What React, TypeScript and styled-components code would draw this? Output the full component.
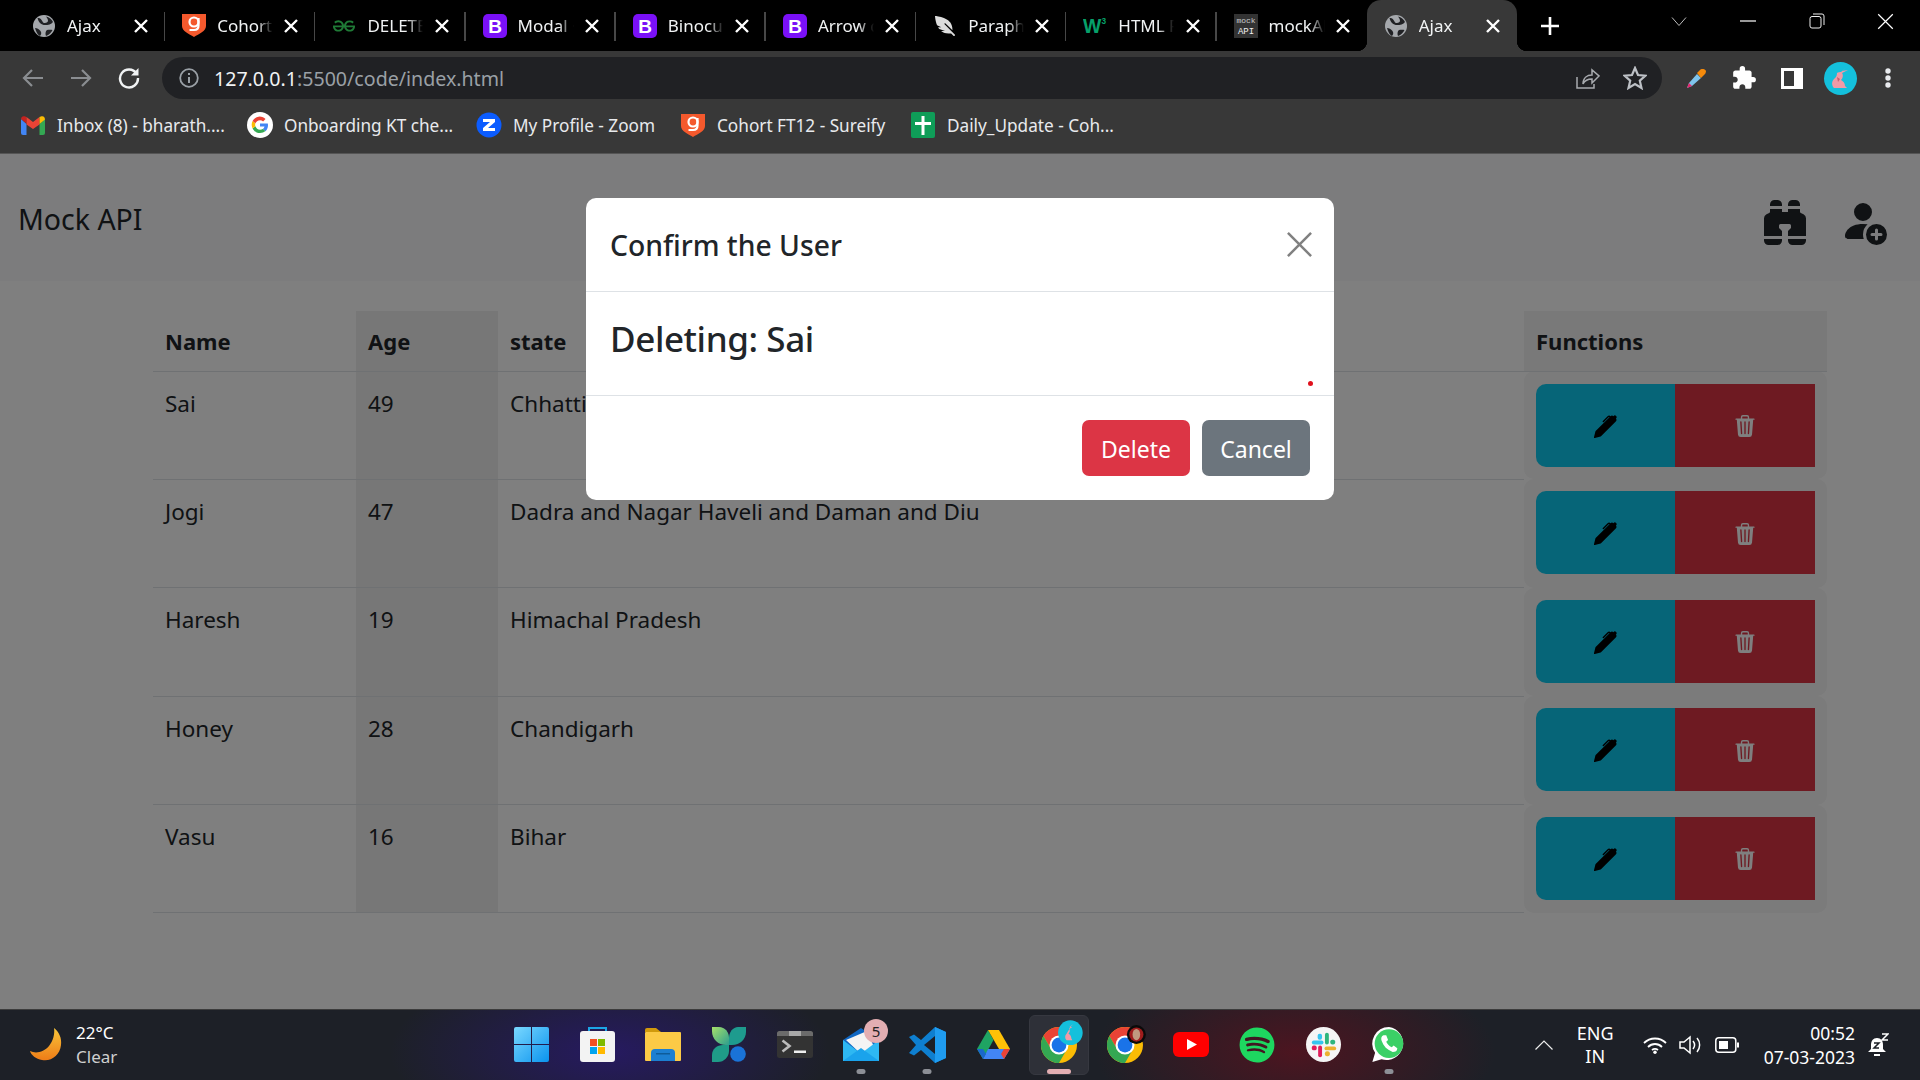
import React from "react";
import styled, { createGlobalStyle } from "styled-components";
import { BsBinocularsFill, BsPersonFillAdd, BsPenFill, BsTrash3Fill } from "react-icons/bs";
import { SiGeeksforgeeks } from "react-icons/si";
import { FaFeatherAlt, FaSpotify } from "react-icons/fa";
import { MdExtension } from "react-icons/md";

const FONT = `"Noto Sans", "Open Sans", "Liberation Sans", sans-serif`;

const Global = createGlobalStyle`
  html, body { margin: 0; padding: 0; background: #000; }
  body { font-family: ${FONT}; overflow: hidden; }
  * { box-sizing: border-box; }
`;

const Screen = styled.div`
  width: 1920px;
  height: 1080px;
  display: flex;
  flex-direction: column;
  overflow: hidden;
`;

/* ---------- browser chrome ---------- */
const TabStrip = styled.div`
  height: 51px;
  background: #000;
  display: flex;
  padding-left: 15px;
  flex: none;
`;
const Tab = styled.div<{ $active?: boolean; $last?: boolean }>`
  width: 150.2px;
  height: 51px;
  position: relative;
  display: flex;
  align-items: center;
  padding-left: 17px;
  color: #f1f3f4;
  font-size: 17px;
  background: ${(p) => (p.$active ? "#383838" : "transparent")};
  border-radius: ${(p) => (p.$active ? "14px 14px 0 0" : "0")};
  &::after {
    content: "";
    position: absolute;
    display: ${(p) => (p.$active || p.$last ? "none" : "block")};
    right: 0;
    top: 12px;
    width: 1.5px;
    height: 29px;
    background: #474747;
  }
`;
const TabFootLeft = styled.span`
  position: absolute;
  left: -10px;
  bottom: 0;
  width: 10px;
  height: 10px;
  background: radial-gradient(circle at 0 0, transparent 10px, #383838 10.5px);
`;
const TabFootRight = styled.span`
  position: absolute;
  right: -10px;
  bottom: 0;
  width: 10px;
  height: 10px;
  background: radial-gradient(circle at 100% 0, transparent 10px, #383838 10.5px);
`;
const TabIcon = styled.span`
  width: 24px;
  height: 24px;
  display: flex;
  align-items: center;
  justify-content: center;
  flex: none;
  margin-right: 11px;
`;
const TabLabel = styled.span`
  width: 56px;
  overflow: hidden;
  white-space: nowrap;
  flex: none;
  -webkit-mask-image: linear-gradient(to right, #000 72%, transparent 100%);
  mask-image: linear-gradient(to right, #000 72%, transparent 100%);
`;
const TabClose = styled.span`
  position: absolute;
  right: 17px;
  top: 19px;
  width: 14px;
  height: 14px;
  display: flex;
`;
const FlipIcon = styled.span`
  display: flex;
  transform: scaleX(-1);
`;
const NewTab = styled.div`
  width: 30px;
  margin-left: 18px;
  display: flex;
  align-items: center;
  justify-content: center;
`;
const WindowControls = styled.div`
  margin-left: auto;
  display: flex;
  align-items: flex-start;
  padding-top: 12px;
  padding-right: 0;
`;
const WinBtn = styled.div`
  width: 69px;
  height: 18px;
  display: flex;
  align-items: center;
  justify-content: center;
`;
const Toolbar = styled.div`
  height: 51px;
  background: #383838;
  display: flex;
  align-items: center;
  flex: none;
  padding: 3px 0 0 21px;
`;
const NavBtn = styled.div`
  width: 24px;
  height: 24px;
  margin-right: 24px;
  display: flex;
  align-items: center;
  justify-content: center;
`;
const AddressBar = styled.div`
  width: 1500px;
  height: 42px;
  margin-left: -3px;
  border-radius: 21px;
  background: #202124;
  display: flex;
  align-items: center;
  padding: 0 15px 0 17px;
  font-size: 19.6px;
  color: #9aa0a6;
`;
const UrlHost = styled.span`
  color: #f1f3f4;
`;
const UrlInfo = styled.span`
  width: 20px;
  height: 20px;
  margin-right: 15px;
  display: flex;
`;
const UrlActions = styled.div`
  margin-left: auto;
  display: flex;
  align-items: center;
  gap: 23px;
`;
const ToolIcons = styled.div`
  display: flex;
  align-items: center;
  margin-left: 10px;
`;
const ToolSlot = styled.div`
  width: 48px;
  display: flex;
  align-items: center;
  justify-content: center;
`;
const Avatar = styled.div`
  width: 33px;
  height: 33px;
  border-radius: 50%;
  background: #14c0dc;
  display: flex;
  align-items: center;
  justify-content: center;
`;
const Bookmarks = styled.div`
  height: 51px;
  background: #383838;
  display: flex;
  align-items: center;
  flex: none;
  padding: 0 0 5px 20px;
  color: #e8eaed;
  font-size: 17.2px;
`;
const Bookmark = styled.div<{ $w: number }>`
  width: ${(p) => p.$w}px;
  display: flex;
  align-items: center;
  gap: 11px;
  white-space: nowrap;
  flex: none;
`;
const BmIcon = styled.span`
  width: 26px;
  height: 26px;
  display: flex;
  align-items: center;
  justify-content: center;
  flex: none;
`;

/* ---------- page ---------- */
const Page = styled.div`
  flex: 1;
  position: relative;
  background: #fff;
  border-top: 1px solid #555;
  color: #212529;
  overflow: hidden;
`;
const NavBar = styled.div`
  height: 127px;
  background: #f8f9fa;
  display: flex;
  align-items: flex-start;
  padding: 24px 33px 0 18px;
`;
const Brand = styled.div`
  font-size: 28.5px;
  font-weight: 400;
  line-height: 40px;
  margin-top: 21px;
`;
const NavIcons = styled.div`
  margin-left: auto;
  display: flex;
  align-items: center;
  gap: 30px;
  padding-top: 19px;
  color: #212529;
`;
const TableWrap = styled.div`
  padding: 30px 93px 0 153px;
`;
const Table = styled.table`
  width: 1674px;
  border-collapse: collapse;
  table-layout: fixed;
  font-size: 22.5px;
`;
const Th = styled.th<{ $tint?: string; $w: number }>`
  width: ${(p) => p.$w}px;
  height: 60px;
  padding: 0 12px;
  text-align: left;
  font-size: 22px;
  font-weight: 700;
  background: ${(p) => p.$tint || "transparent"};
  border-bottom: 1px solid #dee2e6;
`;
const Td = styled.td<{ $tint?: string }>`
  height: 108.4px;
  padding: 14px 12px 0;
  vertical-align: top;
  line-height: 36px;
  background: ${(p) => p.$tint || "transparent"};
  border-bottom: 1px solid #dee2e6;
`;
const FnCell = styled.td`
  padding: 12px;
  background: #f6f6f6;
  border-radius: 10px;
  vertical-align: top;
`;
const BtnGroup = styled.div`
  display: flex;
  height: 83px;
`;
const EditBtn = styled.div`
  flex: 139;
  background: #0dcaf0;
  color: #000;
  border-radius: 10px 0 0 10px;
  display: flex;
  align-items: center;
  justify-content: center;
  padding-top: 2px;
`;
const DelBtn = styled.div`
  flex: 140;
  background: #dc3545;
  color: #fff;
  display: flex;
  align-items: center;
  justify-content: center;
  padding-top: 2px;
`;

/* ---------- modal ---------- */
const Backdrop = styled.div`
  position: absolute;
  inset: 0;
  background: rgba(0, 0, 0, 0.5);
  display: flex;
  justify-content: center;
  padding-top: 44px;
`;
const Modal = styled.div`
  position: relative;
  width: 748px;
  height: 302px;
  background: #fff;
  border-radius: 10px;
  display: flex;
  flex-direction: column;
`;
const ModalHeader = styled.div`
  height: 94px;
  border-bottom: 1px solid #dee2e6;
  display: flex;
  align-items: center;
  justify-content: space-between;
  padding: 0 21px 0 24px;
`;
const ModalTitle = styled.div`
  font-size: 28.3px;
  font-weight: 500;
`;
const ModalBody = styled.div`
  height: 104px;
  border-bottom: 1px solid #dee2e6;
  padding: 24px 24px 0;
  font-size: 35px;
  font-weight: 500;
  letter-spacing: -0.4px;
  line-height: 46px;
`;
const ModalFooter = styled.div`
  flex: 1;
  display: flex;
  justify-content: flex-end;
  align-items: center;
  gap: 12px;
  padding: 0 24px;
`;
const ModalBtn = styled.div<{ $bg: string }>`
  width: 108px;
  height: 56px;
  border-radius: 7px;
  background: ${(p) => p.$bg};
  color: #fff;
  font-size: 23px;
  display: flex;
  align-items: center;
  justify-content: center;
  padding-top: 1px;
`;
const RedDot = styled.span`
  position: absolute;
  left: 722px;
  top: 183px;
  width: 5px;
  height: 5px;
  border-radius: 50%;
  background: #e0101c;
`;

/* ---------- taskbar ---------- */
const Taskbar = styled.div`
  height: 71px;
  flex: none;
  display: grid;
  grid-template-columns: 1fr auto 1fr;
  align-items: center;
  color: #fff;
  border-top: 1px solid #3c3c3c;
  background:
    radial-gradient(ellipse 220px 90px at 610px 60%, #261a60 0%, transparent 100%),
    radial-gradient(ellipse 200px 90px at 1295px 60%, #4c1520 0%, transparent 100%),
    #1d2027;
`;
const Weather = styled.div`
  display: flex;
  align-items: center;
  padding-left: 29px;
  gap: 11px;
`;
const WeatherText = styled.div`
  font-size: 17px;
  line-height: 24px;
`;
const WeatherSub = styled.div`
  color: #cfcfcf;
`;
const Apps = styled.div`
  display: flex;
`;
const AppBtn = styled.div<{ $active?: boolean }>`
  position: relative;
  width: 66px;
  height: 60px;
  display: flex;
  align-items: center;
  justify-content: center;
  padding-bottom: 1px;
  &::before {
    content: "";
    position: absolute;
    inset: 0 3px;
    border-radius: 6px;
    background: ${(p) => (p.$active ? "#2e3038" : "transparent")};
    border: 1px solid ${(p) => (p.$active ? "#363840" : "transparent")};
  }
  & > svg {
    position: relative;
    overflow: visible;
  }
`;
const RunDot = styled.span<{ $on?: boolean }>`
  position: absolute;
  left: 50%;
  bottom: 1px;
  transform: translateX(-50%);
  width: ${(p) => (p.$on ? "24px" : "9px")};
  height: 5px;
  border-radius: 3px;
  background: ${(p) => (p.$on ? "#e3aeb2" : "#8c8f96")};
`;
const Badge = styled.span`
  position: absolute;
  left: 36px;
  top: 4px;
  width: 24px;
  height: 24px;
  border-radius: 50%;
  background: #e3aeb2;
  color: #222;
  font-size: 15px;
  display: flex;
  align-items: center;
  justify-content: center;
`;
const Tray = styled.div`
  justify-self: end;
  display: flex;
  align-items: center;
  padding-right: 31px;
  font-size: 18px;
`;
const Lang = styled.div`
  text-align: center;
  line-height: 23px;
  margin: 0 29px 0 24px;
`;
const TrayIcons = styled.div`
  display: flex;
  align-items: center;
  gap: 12px;
  margin-right: 25px;
`;
const Clock = styled.div`
  text-align: right;
  line-height: 24px;
  margin-right: 13px;
  font-size: 17.5px;
`;

/* ---------- icons ---------- */
const X = ({ s = 14, w = 2.4, c = "#fff" }: { s?: number; w?: number; c?: string }) => (
  <svg width={s} height={s} viewBox="0 0 14 14">
    <path d="M1 1 13 13M13 1 1 13" stroke={c} strokeWidth={w} fill="none" />
  </svg>
);
const Shield = () => (
  <svg width="24" height="23" viewBox="0 0 24 23">
    <path d="M0 0h24v12c0 5-7 8-12 11C7 20 0 17 0 12z" fill="#f4592d" />
    <circle cx="12" cy="8" r="4.500" fill="none" stroke="#fff" strokeWidth="2.200" />
    <path d="M16.500 4v7.500c0 3-2 4.500-4.500 4.500H7.500" fill="none" stroke="#fff" strokeWidth="2.200" />
  </svg>
);
const W3 = () => (
  <svg width="26" height="22" viewBox="0 0 26 22">
    <text x="0" y="19" fontSize="21" fontWeight="700" fill="#06a06a" fontFamily="Liberation Sans">W</text>
    <text x="20" y="9" fontSize="9" fontWeight="700" fill="#06a06a" fontFamily="Liberation Sans">3</text>
  </svg>
);
const MockApi = () => (
  <svg width="24" height="24" viewBox="0 0 24 24">
    <rect width="24" height="24" fill="#333" />
    <text x="12" y="9" fontSize="8" fill="#ccc" textAnchor="middle" fontFamily="Liberation Mono">mock</text>
    <text x="12" y="20" fontSize="9" fill="#eee" textAnchor="middle" fontFamily="Liberation Mono">API</text>
  </svg>
);
const Globe = () => (
  <svg width="22" height="22" viewBox="0 0 22 22">
    <circle cx="11" cy="11" r="11" fill="#a5a8ac" />
    <path d="M4.500 3c2.500-.5 4 1.500 5 3.500 1 2.300 3.500 1.500 5 .5 1-1 .5-3-1.500-5.500 3 .5 6 3 7 5.500-1.500 2.500-5 3-8 3-3.500 0-6.500-2.500-7.500-7z" fill="#202124" />
    <path d="M2 13c2 0 4 1 5.500 3s.5 4-.5 5c-2-1-4-4-5-8zM14 15c2-.5 4-.5 5.500 0-1 2.500-3.500 5-6.500 6-1-2-.5-5 1-6z" fill="#202124" />
  </svg>
);
const Boot = () => (
  <svg width="24" height="24" viewBox="0 0 24 24">
    <rect width="24" height="24" rx="5" fill="#7a10f7" />
    <text x="12" y="19" fontSize="19" fontWeight="700" fill="#fff" textAnchor="middle" fontFamily="Liberation Sans">B</text>
  </svg>
);

const GmailIcon = () => (
  <svg width="24" height="19" viewBox="0 0 24 19">
    <path d="M0 3v14a2 2 0 0 0 2 2h3.500V8z" fill="#4285f4" />
    <path d="M24 3v14a2 2 0 0 1-2 2h-3.500V8z" fill="#34a853" />
    <path d="M0 3 5.500 7.500 5.500 1 3.500.3C2 -.3 0 .8 0 3z" fill="#c5221f" />
    <path d="M5.500 1v7.500L12 13l6.500-4.500V1L12 6z" fill="#ea4335" />
    <path d="M18.500 1v7L24 3.500C24 .8 22-.3 20.500.3z" fill="#fbbc04" />
  </svg>
);
const GoogleIcon = () => (
  <svg width="26" height="26" viewBox="0 0 26 26">
    <circle cx="13" cy="13" r="13" fill="#fff" />
    <path d="M21 13.200c0-.7-.1-1.200-.2-1.700H13v3.100h4.500c-.2 1-.8 1.900-1.700 2.500l2.700 2.100c1.600-1.500 2.500-3.600 2.500-6z" fill="#4285f4" />
    <path d="M13 21c2.200 0 4-.7 5.500-2l-2.700-2.100c-.7.500-1.700.8-2.800.8-2.200 0-4-1.500-4.600-3.400l-2.800 2.100C7 19.200 9.800 21 13 21z" fill="#34a853" />
    <path d="M8.400 14.300a4.800 4.800 0 0 1 0-3L5.600 9.100a8 8 0 0 0 0 7.300z" fill="#fbbc05" />
    <path d="M13 8.200c1.200 0 2.300.4 3.100 1.200l2.400-2.400A8 8 0 0 0 5.600 9.100l2.800 2.200C9 9.600 10.800 8.200 13 8.200z" fill="#ea4335" />
  </svg>
);
const ZoomIcon = () => (
  <svg width="26" height="26" viewBox="0 0 26 26">
    <circle cx="13" cy="13" r="12.500" fill="#0b5cff" />
    <path d="M7 7h12v3l-7 6h7v3H7v-3l7-6H7z" fill="#fff" />
  </svg>
);
const SheetIcon = () => (
  <svg width="24" height="26" viewBox="0 0 24 26">
    <rect width="24" height="26" rx="2" fill="#0f9d58" />
    <path d="M10.500 4h3v6H20v3h-6.500v10h-3V13H4v-3h6.500z" fill="#fff" />
  </svg>
);

const WinLogo = () => (
  <svg width="35" height="35" viewBox="0 0 35 35">
    <defs>
      <linearGradient id="wl" x1="0" y1="0" x2="1" y2="1"><stop offset="0" stopColor="#7ad8ff" /><stop offset="1" stopColor="#0a93ee" /></linearGradient>
    </defs>
    <path d="M0 2a2 2 0 0 1 2-2h15v17H0zM18 0h15a2 2 0 0 1 2 2v15H18zM0 18h17v17H2a2 2 0 0 1-2-2zM18 18h17v15a2 2 0 0 1-2 2H18z" fill="url(#wl)" />
  </svg>
);
const StoreIcon = () => (
  <svg width="35" height="35" viewBox="0 0 35 35">
    <path d="M9 6V1h17v5" fill="none" stroke="#1ca6e6" strokeWidth="2" />
    <path d="M3 4h29a3 3 0 0 1 3 3v25a3 3 0 0 1-3 3H3a3 3 0 0 1-3-3V7a3 3 0 0 1 3-3z" fill="#f3f3f3" />
    <rect x="10" y="12" width="7" height="7" fill="#f25022" />
    <rect x="18" y="12" width="7" height="7" fill="#7fba00" />
    <rect x="10" y="20" width="7" height="7" fill="#00a4ef" />
    <rect x="18" y="20" width="7" height="7" fill="#ffb900" />
  </svg>
);
const FilesIcon = () => (
  <svg width="36" height="33" viewBox="0 0 36 33">
    <path d="M0 2a2 2 0 0 1 2-2h9l5 4H0z" fill="#d19a0c" />
    <rect x="0" y="4" width="36" height="29" rx="1" fill="#fcca46" />
    <path d="M6 25a4 4 0 0 1 4-4h16a4 4 0 0 1 4 4v8H6z" fill="#1c7fd1" />
    <rect x="11" y="25" width="14" height="1.500" fill="#0e5c99" />
  </svg>
);
const ButterflyIcon = () => (
  <svg width="34" height="35" viewBox="0 0 34 35">
    <defs><linearGradient id="bf" x1="0" y1="0" x2="1" y2="1"><stop offset="0" stopColor="#a6e06a" /><stop offset="1" stopColor="#2e9e8e" /></linearGradient></defs>
    <path d="M0 0h7c6 0 10 5 10 11v7h-3C6 18 0 12 0 4z" fill="url(#bf)" />
    <path d="M34 0h-8c-5 0-9 5-9 11v7h3c8 0 14-6 14-13z" fill="#1e9b8e" />
    <path d="M0 35v-7c0-6 5-10 11-10h6v6c0 6-5 11-11 11z" fill="#1f9c88" />
    <circle cx="26" cy="27" r="7.800" fill="#1a73d8" />
  </svg>
);
const TermIcon = () => (
  <svg width="36" height="27" viewBox="0 0 36 27">
    <rect width="36" height="27" rx="2.500" fill="#333" />
    <path d="M0 2.500A2.500 2.500 0 0 1 2.500 0h31A2.500 2.500 0 0 1 36 2.500V5H0z" fill="#6b6b6b" />
    <rect x="12" y="0" width="12" height="5" fill="#a8a8a8" />
    <path d="M5.500 9.500l7 5.500-7 5.500" stroke="#bbb" strokeWidth="2.600" fill="none" />
    <rect x="17" y="19.500" width="12" height="2.500" fill="#eee" />
  </svg>
);
const MailIcon = () => (
  <svg width="36" height="33" viewBox="0 0 36 33">
    <path d="M18 0 36 12v21H0V12z" fill="#0f66c2" />
    <path d="M3 12 24 3l7 16-13 7z" fill="#f4f4f4" />
    <path d="M0 12 16 24h4l16-12v21H0z" fill="#2eb8f2" />
    <path d="M0 33 18 20l18 13z" fill="#1aa3ec" />
  </svg>
);
const VsIcon = () => (
  <svg width="37" height="36" viewBox="0 0 37 36">
    <path d="M26 0 37 5v26l-11 5-14-13-7 5.500L0 26l7-8-7-8 5-2.500L12 13z" fill="#0e7fd0" />
    <path d="M26 0 37 5v26l-11 5z" fill="#1f9cf0" />
    <path d="M26 9 15 18l11 9z" fill="#1d1f26" />
  </svg>
);
const DriveIcon = () => (
  <svg width="33" height="29" viewBox="0 0 33 29">
    <path d="M11 0h0l5.500 10L6 29 0 19z" fill="#1fa463" />
    <path d="M11 0h11l11 19H22z" fill="#ffc107" />
    <path d="M11 19h22l-6 10H6z" fill="#4285f4" />
    <path d="M27 29l6-10h-6l-3 5z" fill="#ea4335" />
    <path d="M6 29 0 19h6l3 5z" fill="#1a68c9" />
  </svg>
);
const ChromeIcon = ({ children }: { children?: React.ReactNode }) => (
  <svg width="36" height="36" viewBox="0 0 38 38">
    <circle cx="19" cy="19" r="19" fill="#fbbc05" />
    <path d="M35.450 9.500A19 19 0 0 0 2.550 9.500L11 24 19 10z" fill="#ea4335" />
    <path d="M2.550 9.500A19 19 0 0 0 19 38L27 24H11z" fill="#34a853" />
    <circle cx="19" cy="19" r="10" fill="#fff" />
    <circle cx="19" cy="19" r="7.800" fill="#1a73e8" />
    {children}
  </svg>
);
const YtIcon = () => (
  <svg width="36" height="25" viewBox="0 0 36 25">
    <rect width="36" height="25" rx="6" fill="#f00" />
    <path d="M14 7l10 5.500-10 5.500z" fill="#fff" />
  </svg>
);
const SlackIcon = () => (
  <svg width="35" height="35" viewBox="0 0 36 36">
    <circle cx="18" cy="18" r="18" fill="#f5f5f5" />
    <rect x="6" y="14" width="12" height="4" rx="2" fill="#36c5f0" />
    <rect x="12" y="7" width="4.500" height="6" rx="2" fill="#36c5f0" />
    <rect x="19.500" y="6" width="4" height="12" rx="2" fill="#2eb67d" />
    <rect x="25" y="13" width="5" height="5" rx="2" fill="#2eb67d" />
    <rect x="19" y="20" width="12" height="4" rx="2" fill="#ecb22e" />
    <rect x="19.500" y="25" width="5" height="5" rx="2" fill="#ecb22e" />
    <rect x="12.500" y="19" width="4" height="12" rx="2" fill="#e01e5a" />
    <rect x="6" y="19" width="5" height="5" rx="2" fill="#e01e5a" />
  </svg>
);
const WaIcon = () => (
  <svg width="36" height="37" viewBox="0 0 38 40">
    <path d="M19 1a18 18 0 0 0-15 28L1 39l10-3A18 18 0 1 0 19 1z" fill="#fff" />
    <circle cx="19" cy="19" r="15.500" fill="#3bd066" />
    <path d="M13 10c-2 1-3 3-2 6 2 6 6 10 12 12 3 0 5-1 5-4l-4-3-2 2c-3-1-5-4-6-6l2-2-2-5z" fill="#fff" />
  </svg>
);

const tabs = [
  { t: "Ajax", i: <Globe /> },
  { t: "Cohort FT12", i: <Shield /> },
  { t: "DELETE - HTTP", i: <SiGeeksforgeeks size={22} color="#1f7a36" /> },
  { t: "Modal · Bootstrap", i: <Boot /> },
  { t: "Binoculars", i: <Boot /> },
  { t: "Arrow down", i: <Boot /> },
  { t: "Paraphrasing", i: <FlipIcon><FaFeatherAlt size={20} color="#ddd" /></FlipIcon> },
  { t: "HTML Reference", i: <W3 /> },
  { t: "mockAPI", i: <MockApi /> },
  { t: "Ajax", i: <Globe />, active: true },
];

const rows = [
  ["Sai", "49", "Chhattisgarh"],
  ["Jogi", "47", "Dadra and Nagar Haveli and Daman and Diu"],
  ["Haresh", "19", "Himachal Pradesh"],
  ["Honey", "28", "Chandigarh"],
  ["Vasu", "16", "Bihar"],
];

const Rabbit = ({ s = 22 }: { s?: number }) => (
  <svg width={s} height={s} viewBox="0 0 22 22">
    <path d="M18 0l-5 4 6-1-6 3c2 3 0 6-1 7 2 1 4 3 4 6l2 2H5c-2-2-3-6 0-9 2-2 3-3 3-6 1-1 3-1 4-1z" fill="#f29aa6" />
    <path d="M8 10l3 2-2 3z" fill="#c8606e" />
  </svg>
);

const apps: { el: React.ReactNode; dot?: boolean; active?: boolean; badge?: string }[] = [
  { el: <WinLogo /> },
  { el: <StoreIcon /> },
  { el: <FilesIcon /> },
  { el: <ButterflyIcon /> },
  { el: <TermIcon /> },
  { el: <MailIcon />, dot: true, badge: "5" },
  { el: <VsIcon />, dot: true },
  { el: <DriveIcon /> },
  {
    el: (
      <ChromeIcon>
        <circle cx="31" cy="6" r="13" fill="#14c0dc" />
        <path d="M34-3l-4 3 3 0-3 2c1 2 0 4-1 5 2 1 3 3 3 5l1 2h-6c-2-2-2-5 0-7 1-2 3-4 3-6z" fill="#f29aa6" />
      </ChromeIcon>
    ),
    active: true,
  },
  {
    el: (
      <ChromeIcon>
        <circle cx="31" cy="8" r="10" fill="#0a0a0a" />
        <circle cx="31" cy="8" r="7.500" fill="#a01c1c" />
        <ellipse cx="31" cy="8" rx="4" ry="6" fill="#c09a80" />
      </ChromeIcon>
    ),
  },
  { el: <YtIcon /> },
  { el: <FaSpotify size={36} color="#1ed760" /> },
  { el: <SlackIcon /> },
  { el: <WaIcon />, dot: true },
];

export default function App() {
  return (
    <Screen>
      <Global />
      <TabStrip>
        {tabs.map((t, i) => (
          <Tab key={i} $active={t.active} $last={i === 8}>
            {t.active && <TabFootLeft />}
            {t.active && <TabFootRight />}
            <TabIcon>{t.i}</TabIcon>
            <TabLabel>{t.t}</TabLabel>
            <TabClose><X /></TabClose>
          </Tab>
        ))}
        <NewTab>
          <svg width="18" height="18" viewBox="0 0 18 18"><path d="M9 0v18M0 9h18" stroke="#fff" strokeWidth="2.600" /></svg>
        </NewTab>
        <WindowControls>
          <WinBtn><svg width="16" height="9" viewBox="0 0 16 9"><path d="M1 .5l7 8 7-8" stroke="#bbb" fill="none" /></svg></WinBtn>
          <WinBtn><svg width="16" height="2" viewBox="0 0 16 2"><path d="M0 1h16" stroke="#fff" strokeWidth="1.200" /></svg></WinBtn>
          <WinBtn><svg width="16" height="16" viewBox="0 0 16 16"><rect x="1" y="3.500" width="11" height="11.500" rx="2" fill="none" stroke="#eee" /><path d="M4 1h9a2 2 0 0 1 2 2v9" fill="none" stroke="#eee" /></svg></WinBtn>
          <WinBtn><X s={17} w={1} c="#fff" /></WinBtn>
        </WindowControls>
      </TabStrip>

      <Toolbar>
        <NavBtn><svg width="22" height="20" viewBox="0 0 22 20"><path d="M21 10H2M10 2 2 10l8 8" stroke="#8a8d91" strokeWidth="2.200" fill="none" /></svg></NavBtn>
        <NavBtn><svg width="22" height="20" viewBox="0 0 22 20"><path d="M1 10h19M12 2l8 8-8 8" stroke="#8a8d91" strokeWidth="2.200" fill="none" /></svg></NavBtn>
        <NavBtn><svg width="22" height="22" viewBox="0 0 22 22"><path d="M18.500 6.500A9 9 0 1 0 20 11" stroke="#f1f3f4" strokeWidth="2.400" fill="none" /><path d="M20.500 1v7.500H13z" fill="#f1f3f4" /></svg></NavBtn>
        <AddressBar>
          <UrlInfo><svg width="20" height="20" viewBox="0 0 20 20"><circle cx="10" cy="10" r="8.800" fill="none" stroke="#9aa0a6" strokeWidth="1.800" /><path d="M10 9v6M10 5v2" stroke="#9aa0a6" strokeWidth="2" /></svg></UrlInfo>
          <span><UrlHost>127.0.0.1</UrlHost>:5500/code/index.html</span>
          <UrlActions>
            <svg width="24" height="24" viewBox="0 0 24 24"><path d="M1 11v11h17v-4M7 18c0-6 4-9 9-9V4l7 6-7 7v-4c-4 0-7 1-9 5z" fill="none" stroke="#a8abaf" strokeWidth="1.500" /></svg>
            <svg width="24" height="24" viewBox="0 0 24 24"><path d="M12 2l3 7 7.500.7-5.700 5 1.700 7.300L12 18l-6.500 4 1.700-7.300-5.700-5L9 9z" fill="none" stroke="#bdc1c6" strokeWidth="2.200" /></svg>
          </UrlActions>
        </AddressBar>
        <ToolIcons>
          <ToolSlot>
            <svg width="19" height="19" viewBox="0 0 19 19">
              <path d="M0 19l2-5L10 5l4 4-9 8z" fill="#7fc4ec" />
              <path d="M0 19l2-5 3 3z" fill="#e8266b" />
              <path d="M10 4l3-3c2-2 5-1 6 1 0 2-1 3-2 4l-3 3z" fill="#f58a0b" />
            </svg>
          </ToolSlot>
          <ToolSlot><MdExtension size={26} color="#fff" /></ToolSlot>
          <ToolSlot>
            <svg width="22" height="21" viewBox="0 0 22 21"><path fillRule="evenodd" d="M0 0h22v21H0zM3 3v15h10V3z" fill="#fff" /></svg>
          </ToolSlot>
          <ToolSlot><Avatar><Rabbit /></Avatar></ToolSlot>
          <ToolSlot>
            <svg width="6" height="20" viewBox="0 0 6 20"><circle cx="3" cy="3" r="2.700" fill="#e8eaed" /><circle cx="3" cy="10" r="2.700" fill="#e8eaed" /><circle cx="3" cy="17" r="2.700" fill="#e8eaed" /></svg>
          </ToolSlot>
        </ToolIcons>
      </Toolbar>

      <Bookmarks>
        <Bookmark $w={227}><BmIcon><GmailIcon /></BmIcon>Inbox (8) - bharath....</Bookmark>
        <Bookmark $w={229}><BmIcon><GoogleIcon /></BmIcon>Onboarding KT che...</Bookmark>
        <Bookmark $w={204}><BmIcon><ZoomIcon /></BmIcon>My Profile - Zoom</Bookmark>
        <Bookmark $w={230}><BmIcon><Shield /></BmIcon>Cohort FT12 - Sureify</Bookmark>
        <Bookmark $w={230}><BmIcon><SheetIcon /></BmIcon>Daily_Update - Coh...</Bookmark>
      </Bookmarks>

      <Page>
        <NavBar>
          <Brand>Mock API</Brand>
          <NavIcons>
            <BsBinocularsFill size={48} />
            <BsPersonFillAdd size={48} />
          </NavIcons>
        </NavBar>
        <TableWrap>
          <Table>
            <thead>
              <tr>
                <Th $w={203}>Name</Th>
                <Th $w={142} $tint="#eeeeee">Age</Th>
                <Th $w={1026}>state</Th>
                <Th $w={303} $tint="#f2f2f2">Functions</Th>
              </tr>
            </thead>
            <tbody>
              {rows.map((r) => (
                <tr key={r[0]}>
                  <Td>{r[0]}</Td>
                  <Td $tint="#eeeeee">{r[1]}</Td>
                  <Td>{r[2]}</Td>
                  <FnCell>
                    <BtnGroup>
                      <EditBtn><BsPenFill size={23} /></EditBtn>
                      <DelBtn><BsTrash3Fill size={22} /></DelBtn>
                    </BtnGroup>
                  </FnCell>
                </tr>
              ))}
            </tbody>
          </Table>
        </TableWrap>
        <Backdrop>
          <Modal>
            <ModalHeader>
              <ModalTitle>Confirm the User</ModalTitle>
              <X s={27} w={1.300} c="#808080" />
            </ModalHeader>
            <ModalBody>Deleting: Sai</ModalBody>
            <ModalFooter>
              <ModalBtn $bg="#dc3545">Delete</ModalBtn>
              <ModalBtn $bg="#6c757d">Cancel</ModalBtn>
            </ModalFooter>
            <RedDot />
          </Modal>
        </Backdrop>
      </Page>

      <Taskbar>
        <Weather>
          <svg width="36" height="36" viewBox="0 0 36 36">
            <defs><linearGradient id="mn" x1="0" y1="0" x2="0" y2="1"><stop offset="0" stopColor="#f8c53a" /><stop offset="1" stopColor="#ee7c17" /></linearGradient></defs>
            <path d="M25 1c5 4 8 10 7 17-1 10-10 17-19 15C7 32 2 28 1 24c6 3 14 1 19-5 4-5 6-12 5-18z" fill="url(#mn)" />
          </svg>
          <WeatherText>22°C<WeatherSub>Clear</WeatherSub></WeatherText>
        </Weather>
        <Apps>
          {apps.map((a, i) => (
            <AppBtn key={i} $active={a.active}>
              {a.el}
              {a.badge && <Badge>{a.badge}</Badge>}
              {(a.dot || a.active) && <RunDot $on={a.active} />}
            </AppBtn>
          ))}
        </Apps>
        <Tray>
          <svg width="18" height="10" viewBox="0 0 18 10"><path d="M.5 9.500 9 1l8.500 8.500" stroke="#eee" strokeWidth="1.200" fill="none" /></svg>
          <Lang>ENG<br />IN</Lang>
          <TrayIcons>
            <svg width="24" height="17" viewBox="0 0 24 17"><path d="M1 6c6-6 16-6 22 0M5 10c4-4 10-4 14 0M9 13c2-1.500 4-1.500 6 0" stroke="#fff" strokeWidth="1.800" fill="none" /><circle cx="12" cy="15.300" r="1.700" fill="#fff" /></svg>
            <svg width="24" height="20" viewBox="0 0 24 20"><path d="M1 7h4l6-5v16l-6-5H1z" stroke="#fff" strokeWidth="1.500" fill="none" /><path d="M14 6c2 2.500 2 5.500 0 8M18 3c3.500 4 3.500 10 0 14" stroke="#fff" strokeWidth="1.500" fill="none" /></svg>
            <svg width="24" height="16" viewBox="0 0 24 16"><rect x=".8" y=".8" width="20" height="14.400" rx="3" stroke="#fff" strokeWidth="1.500" fill="none" /><rect x="4" y="4" width="9" height="8" fill="#fff" /><rect x="22" y="5.500" width="2" height="5" fill="#fff" /></svg>
          </TrayIcons>
          <Clock>00:52<br />07-03-2023</Clock>
          <svg width="21" height="24" viewBox="0 0 21 24"><path d="M9 5c-4 0-6 3-6 7v4l-3 3h18l-3-3v-4c0-4-2-7-6-7z" fill="#fff" /><path d="M6 21h6v2H6z" fill="#fff" /><path d="M14 1h6l-6 6h6" stroke="#fff" strokeWidth="1.500" fill="none" /><path d="M6 10h5l-5 5h5" stroke="#1d2027" strokeWidth="1.500" fill="none" /></svg>
        </Tray>
      </Taskbar>
    </Screen>
  );
}
